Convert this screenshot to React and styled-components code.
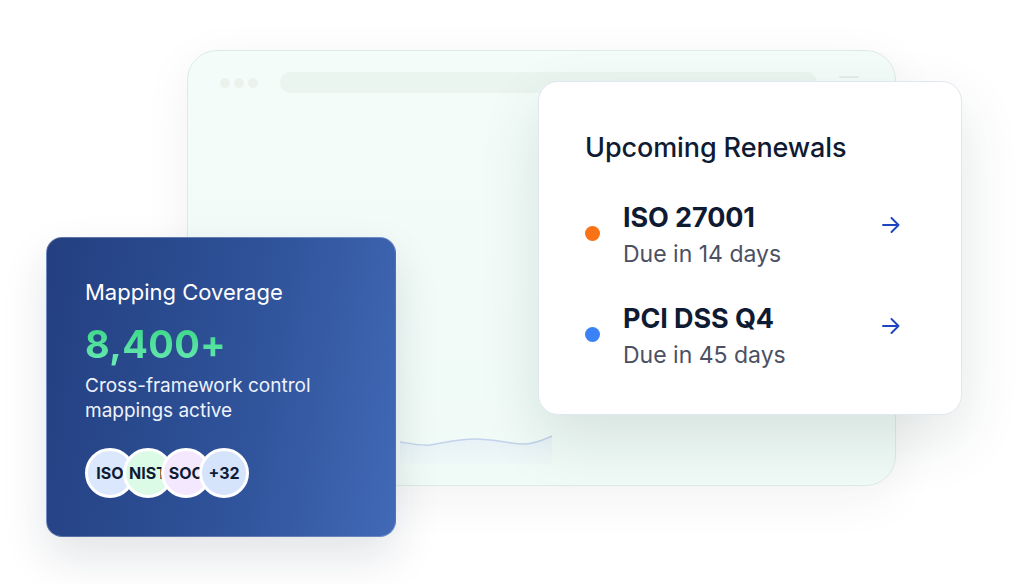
import React from "react";
import styled, { createGlobalStyle } from "styled-components";

const GlobalStyle = createGlobalStyle`
  html, body {
    margin: 0;
    padding: 0;
    background: #ffffff;
  }
  body {
    font-family: Inter, "Noto Sans", "Liberation Sans", sans-serif;
    -webkit-font-smoothing: antialiased;
  }
`;

const Stage = styled.div`
  position: relative;
  width: 1022px;
  height: 584px;
  overflow: hidden;
  background: #ffffff;
  padding: 50px 0 0 187px;
  box-sizing: border-box;
`;

// mock browser window sitting behind the two cards
const Browser = styled.div`
  width: 709px;
  height: 436px;
  box-sizing: border-box;
  border: 1px solid #dcebe6;
  border-radius: 30px;
  background: linear-gradient(180deg, #f3fcf9 0%, #f0faf6 100%);
  box-shadow: 0 12px 50px rgba(30, 40, 40, 0.06);
  display: flex;
  flex-direction: column;
`;

const Chrome = styled.div`
  display: flex;
  align-items: center;
  gap: 22px;
  padding: 21px 36px 0 32px;
  height: 21px;
`;

const Dots = styled.div`
  display: flex;
  gap: 4px;
`;

const Dot = styled.span`
  width: 10px;
  height: 10px;
  border-radius: 50%;
  background: #ebf2ec;
`;

const AddressBar = styled.div`
  flex: 1;
  height: 21px;
  border-radius: 999px;
  background: #ebf5f0;
`;

const MenuLine = styled.span`
  width: 20px;
  height: 2px;
  border-radius: 2px;
  background: #e3ede8;
  margin-top: -12px;
`;

const Body = styled.div`
  flex: 1;
  display: flex;
  align-items: flex-end;
  padding: 0 0 21px 212px;
`;

const Chart = styled.svg`
  display: block;
`;

// floating card: renewals list
const RenewalsCard = styled.div`
  position: absolute;
  left: 538px;
  top: 81px;
  width: 424px;
  height: 334px;
  box-sizing: border-box;
  background: #ffffff;
  border: 1px solid #e1e6f0;
  border-radius: 20px;
  box-shadow: 0 24px 60px rgba(20, 60, 50, 0.12);
  padding: 50px 46px 0 46px;
`;

const CardTitle = styled.h3`
  margin: 0 0 37px;
  font-size: 27px;
  line-height: 32px;
  font-weight: 500;
  color: #0f1b33;
  letter-spacing: -0.1px;
`;

const List = styled.div`
  display: flex;
  flex-direction: column;
  gap: 33px;
`;

const Row = styled.div`
  display: flex;
  align-items: center;
`;

const StatusDot = styled.span`
  width: 15px;
  height: 15px;
  border-radius: 50%;
  background: ${(p) => p.$color};
  flex-shrink: 0;
  margin: 0 23px 0 0;
  position: relative;
  top: -2px;
`;

const RowText = styled.div`
  flex: 1;
  display: flex;
  flex-direction: column;
  gap: 4px;
`;

const RowTitle = styled.div`
  font-size: 27px;
  line-height: 34px;
  font-weight: 700;
  color: #0f1b33;
  letter-spacing: -0.1px;
`;

const RowSub = styled.div`
  font-size: 23px;
  line-height: 30px;
  font-weight: 400;
  color: #4b5163;
`;

const Arrow = styled.svg`
  flex-shrink: 0;
  margin: 0 15px 20px 0;
`;

// floating card: mapping coverage stat
const CoverageCard = styled.div`
  position: absolute;
  left: 46px;
  top: 237px;
  width: 350px;
  height: 300px;
  box-sizing: border-box;
  border-radius: 16px;
  border: 1px solid rgba(255, 255, 255, 0.25);
  background: linear-gradient(100deg, #233f80 0%, #2f5299 55%, #4169b6 100%);
  box-shadow: 0 20px 45px rgba(20, 30, 60, 0.12);
  padding: 40px 38px 0;
  display: flex;
  flex-direction: column;
`;

const CoverageLabel = styled.div`
  font-size: 22px;
  line-height: 28px;
  color: #ffffff;
  font-weight: 400;
`;

const BigNumber = styled.div`
  margin-top: 16px;
  font-size: 38px;
  line-height: 44px;
  font-weight: 700;
  background: linear-gradient(180deg, #36d682 0%, #6ceab6 100%);
  -webkit-background-clip: text;
  background-clip: text;
  color: transparent;
  letter-spacing: 0.3px;
`;

const Caption = styled.div`
  margin-top: 7px;
  font-size: 19px;
  line-height: 25px;
  color: #eef2fb;
  font-weight: 400;
`;

const Badges = styled.div`
  margin-top: 25px;
  display: flex;
`;

const Badge = styled.div`
  width: 50px;
  height: 50px;
  box-sizing: border-box;
  border-radius: 50%;
  border: 3px solid #ffffff;
  background: ${(p) => p.$bg};
  display: flex;
  align-items: center;
  justify-content: center;
  font-size: 16px;
  font-weight: 700;
  color: #0f1b33;
  white-space: nowrap;
  overflow: hidden;
  position: relative;
  & + & {
    margin-left: -12px;
  }
`;

const renewals = [
  { name: "ISO 27001", due: "Due in 14 days", color: "#f97316" },
  { name: "PCI DSS Q4", due: "Due in 45 days", color: "#3b82f6" },
];

const frameworks = [
  { label: "ISO", bg: "#dbe7fc" },
  { label: "NIST", bg: "#dcfbe7" },
  { label: "SOC", bg: "#f3e8fe" },
  { label: "+32", bg: "#d6e4fb" },
];

function ArrowIcon() {
  return (
    <Arrow width="18" height="16" viewBox="0 0 18 16" fill="none">
      <path
        d="M1 8 H16.5 M9.5 1 L16.5 8 L9.5 15"
        stroke="#1e45c0"
        strokeWidth="1.9"
        strokeLinecap="round"
        strokeLinejoin="round"
      />
    </Arrow>
  );
}

export default function App() {
  return (
    <>
      <GlobalStyle />
      <Stage>
        <Browser>
          <Chrome>
            <Dots>
              <Dot />
              <Dot />
              <Dot />
            </Dots>
            <AddressBar />
            <MenuLine />
          </Chrome>
          <Body>
            <Chart width="153" height="30" viewBox="0 0 153 30">
              <defs>
                <linearGradient id="chartFill" x1="0" y1="0" x2="0" y2="1">
                  <stop offset="0" stopColor="#dbe6f7" stopOpacity="0.45" />
                  <stop offset="1" stopColor="#dbe6f7" stopOpacity="0.1" />
                </linearGradient>
              </defs>
              <path
                d="M0 8 C12 10 22 12 30 11 C45 9 55 5 75 5 C95 5 110 10 125 10 C135 10 143 6 152 2 L152 30 L0 30 Z"
                fill="url(#chartFill)"
              />
              <path
                d="M0 8 C12 10 22 12 30 11 C45 9 55 5 75 5 C95 5 110 10 125 10 C135 10 143 6 152 2"
                stroke="#c3d3ea"
                strokeWidth="1.4"
                fill="none"
              />
            </Chart>
          </Body>
        </Browser>

        <RenewalsCard>
          <CardTitle>Upcoming Renewals</CardTitle>
          <List>
            {renewals.map((r) => (
              <Row key={r.name}>
                <StatusDot $color={r.color} />
                <RowText>
                  <RowTitle>{r.name}</RowTitle>
                  <RowSub>{r.due}</RowSub>
                </RowText>
                <ArrowIcon />
              </Row>
            ))}
          </List>
        </RenewalsCard>

        <CoverageCard>
          <CoverageLabel>Mapping Coverage</CoverageLabel>
          <BigNumber>8,400+</BigNumber>
          <Caption>
            Cross-framework control
            <br />
            mappings active
          </Caption>
          <Badges>
            {frameworks.map((f) => (
              <Badge key={f.label} $bg={f.bg}>
                {f.label}
              </Badge>
            ))}
          </Badges>
        </CoverageCard>
      </Stage>
    </>
  );
}
